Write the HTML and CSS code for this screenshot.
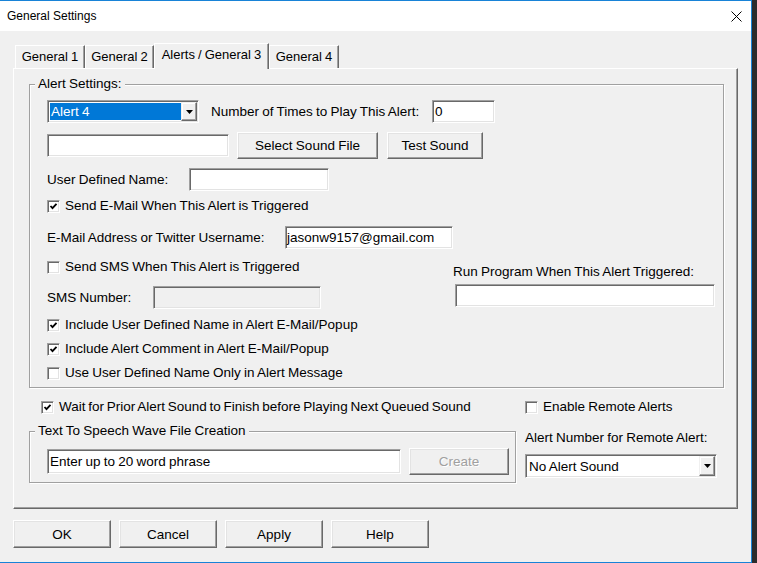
FILE: index.html
```html
<!DOCTYPE html>
<html lang="en">
<head>
    <meta charset="UTF-8">
    <title>General Settings</title>
    <link rel="stylesheet" href="styles.css">
</head>
<body>
    <div class="window">
        <div class="titlebar">
            <span class="title">General Settings</span>
            <svg class="close" width="11" height="11" viewBox="0 0 11 11">
                <path d="M0.5 0.5 L10.5 10.5 M10.5 0.5 L0.5 10.5" stroke="#000" stroke-width="1" fill="none"/>
            </svg>
        </div>

        <div class="client">
            <div class="tabs">
                <div class="tab tab-1">General 1</div>
                <div class="tab tab-2">General 2</div>
                <div class="tab tab-3 active">Alerts / General 3</div>
                <div class="tab tab-4">General 4</div>
            </div>

            <div class="panel">
                <fieldset class="group alert-group">
                    <legend>Alert Settings:</legend>
                    <div class="group-body">
                        <div class="row row-alert">
                            <div class="combo combo-alert">
                                <span class="combo-value selected">Alert 4</span>
                                <span class="combo-btn">
                                    <svg width="7" height="4" viewBox="0 0 7 4"><polygon points="0,0 7,0 3.5,4" fill="#000"/></svg>
                                </span>
                            </div>
                            <span class="label lbl-times">Number of Times to Play This Alert:</span>
                            <div class="field field-times">0</div>
                        </div>

                        <div class="row row-sound">
                            <div class="field field-sound"></div>
                            <div class="btn btn-select">Select Sound File</div>
                            <div class="btn btn-test">Test Sound</div>
                        </div>

                        <div class="row row-name">
                            <span class="label lbl-name">User Defined Name:</span>
                            <div class="field field-name"></div>
                        </div>

                        <div class="row row-check row-email-check">
                            <span class="check checked"><svg width="9" height="9" viewBox="0 0 9 9"><polyline points="1.5,4 3.5,6.2 7.5,1.8" stroke="#000" stroke-width="1.8" fill="none"/></svg></span>
                            <span class="label">Send E-Mail When This Alert is Triggered</span>
                        </div>

                        <div class="row row-email">
                            <span class="label lbl-email">E-Mail Address or Twitter Username:</span>
                            <div class="field field-email">jasonw9157@gmail.com</div>
                        </div>

                        <div class="split">
                            <div class="split-left">
                                <div class="row row-check">
                                    <span class="check"></span>
                                    <span class="label">Send SMS When This Alert is Triggered</span>
                                </div>
                                <div class="row row-sms">
                                    <span class="label lbl-sms">SMS Number:</span>
                                    <div class="field field-sms disabled"></div>
                                </div>
                            </div>
                            <div class="split-right">
                                <span class="label lbl-run">Run Program When This Alert Triggered:</span>
                                <div class="field field-run"></div>
                            </div>
                        </div>

                        <div class="row row-check row-opt">
                            <span class="check checked"><svg width="9" height="9" viewBox="0 0 9 9"><polyline points="1.5,4 3.5,6.2 7.5,1.8" stroke="#000" stroke-width="1.8" fill="none"/></svg></span>
                            <span class="label">Include User Defined Name in Alert E-Mail/Popup</span>
                        </div>
                        <div class="row row-check row-opt">
                            <span class="check checked"><svg width="9" height="9" viewBox="0 0 9 9"><polyline points="1.5,4 3.5,6.2 7.5,1.8" stroke="#000" stroke-width="1.8" fill="none"/></svg></span>
                            <span class="label">Include Alert Comment in Alert E-Mail/Popup</span>
                        </div>
                        <div class="row row-check row-opt">
                            <span class="check"></span>
                            <span class="label">Use User Defined Name Only in Alert Message</span>
                        </div>
                    </div>
                </fieldset>

                <div class="lower">
                    <div class="lower-left">
                        <div class="row row-check row-wait">
                            <span class="check checked"><svg width="9" height="9" viewBox="0 0 9 9"><polyline points="1.5,4 3.5,6.2 7.5,1.8" stroke="#000" stroke-width="1.8" fill="none"/></svg></span>
                            <span class="label">Wait for Prior Alert Sound to Finish before Playing Next Queued Sound</span>
                        </div>
                        <fieldset class="group tts-group">
                            <legend>Text To Speech Wave File Creation</legend>
                            <div class="group-body tts-body">
                                <div class="row">
                                    <div class="field field-phrase">Enter up to 20 word phrase</div>
                                    <div class="btn btn-create disabled">Create</div>
                                </div>
                            </div>
                        </fieldset>
                    </div>

                    <div class="lower-right">
                        <div class="row row-check">
                            <span class="check"></span>
                            <span class="label">Enable Remote Alerts</span>
                        </div>
                        <span class="label lbl-remote">Alert Number for Remote Alert:</span>
                        <div class="combo combo-remote">
                            <span class="combo-value">No Alert Sound</span>
                            <span class="combo-btn">
                                <svg width="7" height="4" viewBox="0 0 7 4"><polygon points="0,0 7,0 3.5,4" fill="#000"/></svg>
                            </span>
                        </div>
                    </div>
                </div>
            </div>

            <div class="buttons">
                <div class="btn btn-main">OK</div>
                <div class="btn btn-main">Cancel</div>
                <div class="btn btn-main">Apply</div>
                <div class="btn btn-main">Help</div>
            </div>
        </div>
    </div>
</body>
</html>
```

FILE: styles.css
```css
* {
    box-sizing: border-box;
}

body {
    margin: 0;
    background: #2b2b2b;
    font-family: "Liberation Sans", Arial, sans-serif;
    font-size: 13.5px;
    word-spacing: -0.5px;
    color: #000;
}

.window {
    width: 752px;
    height: 563px;
    border: 1px solid #1883d7;
    border-left: none;
    background: #f0f0f0;
    display: flex;
    flex-direction: column;
    overflow: hidden;
}

/* title bar */
.titlebar {
    flex: none;
    height: 30px;
    background: #fff;
    display: flex;
    align-items: center;
    justify-content: space-between;
    padding: 0 9px 0 7px;
    font-size: 12px;
    word-spacing: 0;
}

.close {
    display: block;
}

.client {
    flex: 1;
    padding-left: 13px;
}

/* tabs */
.tabs {
    display: flex;
    align-items: flex-end;
    height: 25px;
    margin: 12px 0 0 2px;
    font-size: 13px;
}

.tab {
    height: 23px;
    border: 1px solid;
    border-color: #fff #696969 transparent #fff;
    border-bottom: none;
    box-shadow: inset -1px 0 #a0a0a0;
    display: flex;
    align-items: center;
    justify-content: center;
    line-height: 16px;
    white-space: nowrap;
}

.tab-1 { width: 70px; }
.tab-2 { width: 69px; }
.tab-3 { width: 115px; }
.tab-4 { width: 70px; }

.tab.active {
    height: 26px;
    margin-bottom: -1px;
    padding-bottom: 3px;
    position: relative;
    z-index: 1;
    background: #f0f0f0;
}

.panel {
    width: 725px;
    height: 441px;
    border: 1px solid;
    border-color: #fff #696969 #696969 #fff;
    box-shadow: inset -1px -1px #a0a0a0;
    padding: 7px 0 0 15px;
}

/* group boxes */
.group {
    margin: 0;
    padding: 0;
    min-width: 0;
    border: 1px solid #a0a0a0;
    box-shadow: 1px 1px 0 #fff, inset 1px 1px 0 #fff;
}

.group legend {
    margin-left: 5px;
    padding: 0 3px;
    line-height: 16px;
    background: #f0f0f0;
}

.alert-group {
    width: 695px;
}

.group-body {
    padding: 8px 8px 6px 17px;
}

.row {
    display: flex;
    align-items: center;
}

.label {
    line-height: 16px;
    white-space: nowrap;
    flex: none;
}

/* sunken edit box */
.field {
    flex: none;
    height: 23px;
    background: #fff;
    border: 1px solid;
    border-color: #a0a0a0 #fff #fff #a0a0a0;
    box-shadow: inset 1px 1px #696969, inset -1px -1px #e3e3e3;
    padding: 0 2px;
    display: flex;
    align-items: center;
    white-space: nowrap;
}

.field.disabled {
    background: #f0f0f0;
}

/* raised push button */
.btn {
    flex: none;
    height: 27px;
    background: #f0f0f0;
    border: 1px solid;
    border-color: #fff #696969 #696969 #fff;
    box-shadow: inset -1px -1px #a0a0a0, inset 1px 1px #e3e3e3;
    display: flex;
    align-items: center;
    justify-content: center;
    white-space: nowrap;
}

.btn.disabled {
    color: #a0a0a0;
    text-shadow: 1px 1px 0 #fff;
}

/* drop-down list */
.combo {
    flex: none;
    display: flex;
    height: 23px;
    background: #fff;
    border: 1px solid;
    border-color: #a0a0a0 #fff #fff #a0a0a0;
    box-shadow: inset 1px 1px #696969, inset -1px -1px #e3e3e3;
    padding: 2px;
}

.combo-value {
    flex: 1;
    display: flex;
    align-items: center;
    padding-left: 1px;
    white-space: nowrap;
}

.combo-value.selected {
    background: #0078d7;
    color: #fff;
}

.combo-btn {
    flex: none;
    width: 16px;
    margin: -1px -1px -1px 0;
    background: #f0f0f0;
    border: 1px solid;
    border-color: #f0f0f0 #696969 #696969 #f0f0f0;
    box-shadow: inset -1px -1px #a0a0a0, inset 1px 1px #fff;
    display: flex;
    align-items: center;
    justify-content: center;
}

.combo-btn svg {
    display: block;
}

/* check box */
.check {
    flex: none;
    width: 13px;
    height: 13px;
    background: #fff;
    border: 1px solid;
    border-color: #a0a0a0 #fff #fff #a0a0a0;
    box-shadow: inset 1px 1px #696969, inset -1px -1px #e3e3e3;
    display: flex;
    align-items: center;
    justify-content: center;
    margin-right: 5px;
}

.check svg {
    display: block;
}

.row-check {
    height: 16px;
}

/* alert settings rows */
.row-alert { height: 23px; }
.combo-alert { width: 152px; }
.lbl-times { width: 221px; margin-left: 12px; }
.field-times { width: 63px; }

.row-sound { height: 27px; margin-top: 9px; }
.field-sound { width: 182px; }
.btn-select { width: 141px; margin-left: 8px; }
.btn-test { width: 96px; margin-left: 9px; }

.row-name { height: 23px; margin-top: 9px; }
.lbl-name { width: 142px; }
.field-name { width: 140px; }

.row-email-check { margin-top: 7px; }

.row-email { height: 23px; margin-top: 12px; }
.lbl-email { width: 238px; }
.field-email { width: 168px; padding-left: 1px; }

.split {
    display: flex;
    margin-top: 10px;
}

.split-left {
    width: 406px;
}

.row-sms { height: 23px; margin-top: 11px; }
.lbl-sms { width: 106px; }
.field-sms { width: 168px; }

.split-right {
    display: flex;
    flex-direction: column;
    padding-top: 5px;
}

.field-run {
    width: 260px;
    margin: 4px 0 0 2px;
}

.row-opt { margin-top: 8px; }

/* area under the alert settings group */
.lower {
    display: flex;
    margin-top: 11px;
}

.lower-left {
    width: 487px;
}

.row-wait {
    padding-left: 12px;
    word-spacing: -1px;
}

.tts-group {
    margin-top: 8px;
}

.tts-body {
    padding: 9px 6px 7px 17px;
}

.field-phrase {
    width: 354px;
    height: 25px;
}

.btn-create {
    width: 100px;
    margin-left: 8px;
}

.lower-right {
    margin-left: 9px;
    display: flex;
    flex-direction: column;
}

.lbl-remote {
    margin-top: 15px;
}

.combo-remote {
    width: 192px;
    height: 24px;
    margin-top: 8px;
}

/* dialog buttons */
.buttons {
    display: flex;
    gap: 8px;
    margin-top: 11px;
}

.btn-main {
    width: 98px;
    height: 28px;
}
```
